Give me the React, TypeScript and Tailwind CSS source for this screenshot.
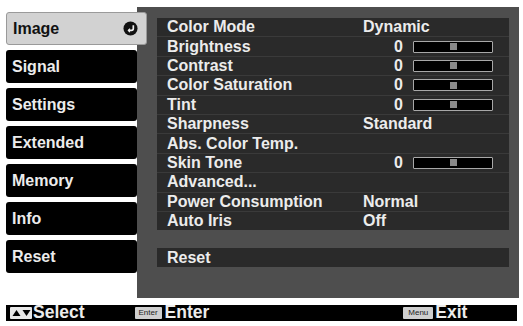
import React from 'react'

type Row = { label: string; value?: string; slider?: boolean }

const rows: Row[] = [
  { label: 'Color Mode', value: 'Dynamic' },
  { label: 'Brightness', slider: true },
  { label: 'Contrast', slider: true },
  { label: 'Color Saturation', slider: true },
  { label: 'Tint', slider: true },
  { label: 'Sharpness', value: 'Standard' },
  { label: 'Abs. Color Temp.' },
  { label: 'Skin Tone', slider: true },
  { label: 'Advanced...' },
  { label: 'Power Consumption', value: 'Normal' },
  { label: 'Auto Iris', value: 'Off' },
]

const menu = ['Signal', 'Settings', 'Extended', 'Memory', 'Info', 'Reset']

function Slider() {
  return (
    <div className="flex items-center">
      <span className="w-[50px] pr-[10px] text-right">0</span>
      <div className="flex h-[12px] w-[80px] items-center justify-center rounded-[1px] border border-[#a8a8a8] bg-black">
        <div className="h-[7px] w-[7px] bg-[#8a8a8a]" />
      </div>
    </div>
  )
}

function EnterIcon() {
  return (
    <svg width="15" height="15" viewBox="0 0 16 16">
      <circle cx="8" cy="8" r="7.5" fill="#111" />
      <path d="M11 4.5v3.5a2 2 0 0 1-2 2H5.5" fill="none" stroke="#eee" strokeWidth="1.8" />
      <path d="M7.5 7.5 4.8 10l2.7 2.5z" fill="#eee" />
    </svg>
  )
}

export default function App() {
  return (
    <div
      className="flex h-[326px] w-[523px] flex-col bg-white pl-[6px] pt-[7px] text-[#ececec]"
      style={{ fontFamily: '"Liberation Sans", Arial, sans-serif' }}
    >
      <div className="flex h-[291px]">
        {/* Left menu */}
        <div className="relative z-10 flex w-[131px] flex-col gap-[5px] pt-[5px]">
          <div className="flex h-[33px] w-[141px] items-center justify-between rounded-[3px] border border-[#9a9a9a] bg-[#d2d2d2] pl-[6px] pr-[8px] text-[16px] font-bold text-[#111]">
            <span>Image</span>
            <EnterIcon />
          </div>
          {menu.map((m) => (
            <div
              key={m}
              className="flex h-[33px] items-center rounded-[3px] bg-black pl-[6px] text-[16px] font-bold"
            >
              {m}
            </div>
          ))}
        </div>

        {/* Right panel */}
        <div className="flex w-[382px] flex-col bg-[#4e4e4e] pl-[20px] pr-[10px] pt-[11px]">
          <div className="flex flex-col gap-[1px] bg-[#3a3a3a]">
            {rows.map((r) => (
              <div
                key={r.label}
                className="flex h-[18.4px] items-center bg-[#2a2a2a] pl-[10px] text-[16px] font-bold leading-none"
              >
                <span className="w-[196px]">{r.label}</span>
                {r.slider ? <Slider /> : <span>{r.value}</span>}
              </div>
            ))}
          </div>
          <div className="mt-[18px] flex h-[19px] items-center bg-[#2a2a2a] pl-[10px] text-[16px] font-bold">
            Reset
          </div>
        </div>
      </div>

      {/* Bottom bar */}
      <div className="mt-[7px] flex h-[16px] w-[511px] items-center bg-black text-[17.5px] font-bold leading-none">
        <div className="ml-[4px] flex h-[12px] w-[22px] items-center justify-center gap-[1px] rounded-[1px] bg-[#e8e8e8]">
          <svg width="9" height="8" viewBox="0 0 9 8">
            <path d="M4.5 1 8.5 7h-8z" fill="#000" />
          </svg>
          <svg width="9" height="8" viewBox="0 0 9 8">
            <path d="M4.5 7 8.5 1h-8z" fill="#000" />
          </svg>
        </div>
        <span className="ml-[1px]">Select</span>
        <div className="ml-[50px] flex h-[12px] w-[27px] items-center justify-center rounded-[1px] bg-[#cfcfcf] text-[8px] font-normal text-[#222]">
          Enter
        </div>
        <span className="ml-[3px]">Enter</span>
        <div className="ml-[194px] flex h-[12px] w-[30px] items-center justify-center rounded-[1px] bg-[#cfcfcf] text-[8px] font-normal text-[#222]">
          Menu
        </div>
        <span className="ml-[2px]">Exit</span>
      </div>
    </div>
  )
}
